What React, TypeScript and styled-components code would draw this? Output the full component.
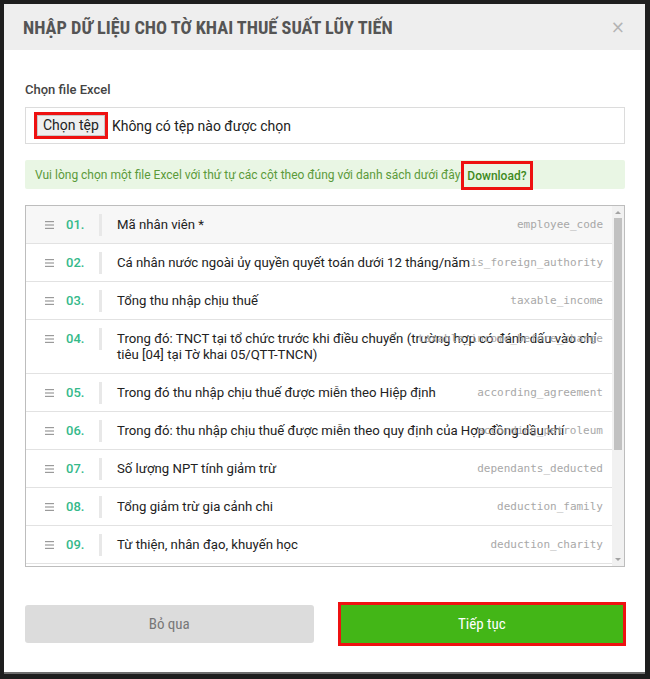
import React from "react";
import styled, { createGlobalStyle } from "styled-components";

const GlobalStyle = createGlobalStyle`
  html, body {
    margin: 0;
    padding: 0;
    background: #1e1e1e;
  }
  body {
    font-family: Roboto, "Liberation Sans", Arial, sans-serif;
  }
  * {
    box-sizing: border-box;
  }
`;

const condensed = `"Roboto Condensed", "Liberation Sans Narrow", Roboto, sans-serif`;

const Backdrop = styled.div`
  width: 650px;
  height: 679px;
  padding: 4px 5px 7px 4px;
  background: #1e1e1e;
`;

const Modal = styled.div`
  width: 641px;
  height: 668px;
  background: #fff;
  display: flex;
  flex-direction: column;
  box-shadow: 0 2px 0 #6e6e6e;
`;

const Header = styled.div`
  height: 46px;
  background: #eeeeee;
  display: flex;
  align-items: center;
  justify-content: space-between;
  padding: 0 20px 0 19px;
`;

const Title = styled.h4`
  margin: 0;
  font-family: ${condensed};
  font-weight: 700;
  font-size: 18.3px;
  color: #555;
`;

const Close = styled.span`
  font-family: "DejaVu Sans", sans-serif;
  font-size: 17px;
  color: #b4b4b4;
  line-height: 1;
`;

const Body = styled.div`
  flex: 1;
  display: flex;
  flex-direction: column;
  padding: 32px 20px 0 21px;
`;

const Label = styled.label`
  font-size: 13px;
  font-weight: 500;
  color: #444;
  line-height: 16px;
`;

const FileBox = styled.div`
  margin-top: 9px;
  height: 37px;
  border: 1px solid #dcdcdc;
  display: flex;
  align-items: center;
  padding-left: 8px;
  gap: 4px;
  font-size: 14px;
  color: #222;
`;

const Highlight = styled.span`
  display: inline-flex;
  border: 3px solid #ee1111;
`;

const PickButton = styled.span`
  display: inline-block;
  background: #efefef;
  border: 1px solid #c8c8c8;
  padding: 1px 5px;
  font-size: 14px;
  color: #222;
  line-height: 17px;
`;

const Alert = styled.div`
  margin-top: 16px;
  height: 29px;
  background: #e9f6e4;
  border-radius: 2px;
  display: flex;
  align-items: center;
  padding-left: 10px;
  font-size: 12px;
  color: #5b9a3a;
`;

const DownloadBox = styled.span`
  display: inline-flex;
  align-items: center;
  margin-left: 1px;
  margin-top: 2px;
  height: 29px;
  padding: 0 3px;
  border: 3px solid #ee1111;
  color: #3f8a1e;
  font-weight: 500;
`;

const List = styled.div`
  margin-top: 16px;
  height: 362px;
  border: 1px solid #bdbdbd;
  display: flex;
`;

const Rows = styled.div`
  flex: 1;
  overflow: hidden;
`;

const Row = styled.div<{ $active?: boolean }>`
  position: relative;
  display: flex;
  align-items: flex-start;
  padding: 11px 9px 10px 19px;
  border-bottom: 1px solid #e2e2e2;
  background: ${(p) => (p.$active ? "#f7f7f7" : "#fff")};
  line-height: 16px;
`;

const Handle = styled.span`
  width: 10px;
  height: 16px;
  display: flex;
  align-items: center;
  color: #9a9a9a;
`;

const Num = styled.span`
  width: 33px;
  margin-left: 11px;
  font-size: 13px;
  font-weight: 500;
  color: #35b98a;
`;

const Divider = styled.span`
  width: 3px;
  height: 22px;
  margin: -3px 0;
  background: #e8e8e8;
`;

const Name = styled.span`
  margin-left: 15px;
  font-size: 13.2px;
  color: #222;
  flex: 1;
`;

const Code = styled.span`
  position: absolute;
  right: 9px;
  top: 11px;
  font-family: "DejaVu Sans Mono", monospace;
  font-size: 11px;
  color: #a8a8a8;
`;

const Track = styled.div`
  width: 12px;
  background: #f1f1f1;
  display: flex;
  flex-direction: column;
  align-items: center;
  padding: 3px 0;
`;

const Arrow = styled.span<{ $down?: boolean }>`
  width: 0;
  height: 0;
  border-left: 3px solid transparent;
  border-right: 3px solid transparent;
  ${(p) =>
    p.$down ? "border-top: 3px solid #a3a3a3;" : "border-bottom: 3px solid #a3a3a3;"}
  margin: 2px 0;
`;

const Thumb = styled.div`
  width: 8px;
  height: 232px;
  margin-top: 2px;
  background: #c1c1c1;
`;

const Spacer = styled.div`
  flex: 1;
`;

const Footer = styled.div`
  display: grid;
  grid-template-columns: 1fr 1fr;
  gap: 24px;
  padding: 35px 19px 0 21px;
  align-items: center;
`;

const Button = styled.button<{ $primary?: boolean }>`
  height: ${(p) => (p.$primary ? "44px" : "38px")};
  border: ${(p) => (p.$primary ? "3px solid #ee1111" : "none")};
  border-radius: ${(p) => (p.$primary ? "0" : "3px")};
  background: ${(p) => (p.$primary ? "#43b617" : "#dcdcdc")};
  color: ${(p) => (p.$primary ? "#fff" : "#777")};
  font-family: ${condensed};
  font-size: 15px;
`;

const HandleIcon = () => (
  <svg width="9" height="8" viewBox="0 0 9 8">
    <rect x="0" y="0" width="9" height="1.2" fill="currentColor" />
    <rect x="0" y="3.4" width="9" height="1.2" fill="currentColor" />
    <rect x="0" y="6.8" width="9" height="1.2" fill="currentColor" />
  </svg>
);

const columns = [
  { name: "Mã nhân viên *", code: "employee_code" },
  { name: "Cá nhân nước ngoài ủy quyền quyết toán dưới 12 tháng/năm", code: "is_foreign_authority" },
  { name: "Tổng thu nhập chịu thuế", code: "taxable_income" },
  {
    name: "Trong đó: TNCT tại tổ chức trước khi điều chuyển (trường hợp có đánh dấu vào chỉ tiêu [04] tại Tờ khai 05/QTT-TNCN)",
    code: "taxable_income_before_change",
  },
  { name: "Trong đó thu nhập chịu thuế được miễn theo Hiệp định", code: "according_agreement" },
  { name: "Trong đó: thu nhập chịu thuế được miễn theo quy định của Hợp đồng dầu khí", code: "according_petroleum" },
  { name: "Số lượng NPT tính giảm trừ", code: "dependants_deducted" },
  { name: "Tổng giảm trừ gia cảnh chi", code: "deduction_family" },
  { name: "Từ thiện, nhân đạo, khuyến học", code: "deduction_charity" },
  { name: "Các khoản đóng bảo hiểm được trừ", code: "deduction_insurance" },
];

export default function App(): JSX.Element {
  return (
    <>
      <GlobalStyle />
      <Backdrop>
        <Modal>
          <Header>
            <Title>NHẬP DỮ LIỆU CHO TỜ KHAI THUẾ SUẤT LŨY TIẾN</Title>
            <Close>×</Close>
          </Header>
          <Body>
            <Label>Chọn file Excel</Label>
            <FileBox>
              <Highlight>
                <PickButton>Chọn tệp</PickButton>
              </Highlight>
              <span>Không có tệp nào được chọn</span>
            </FileBox>
            <Alert>
              Vui lòng chọn một file Excel với thứ tự các cột theo đúng với danh sách dưới đây
              <DownloadBox>Download?</DownloadBox>
            </Alert>
            <List>
              <Rows>
                {columns.map((c, i) => (
                  <Row key={c.code} $active={i === 0}>
                    <Handle>
                      <HandleIcon />
                    </Handle>
                    <Num>{String(i + 1).padStart(2, "0")}.</Num>
                    <Divider />
                    <Name>{c.name}</Name>
                    <Code>{c.code}</Code>
                  </Row>
                ))}
              </Rows>
              <Track>
                <Arrow />
                <Thumb />
                <Spacer />
                <Arrow $down />
              </Track>
            </List>
          </Body>
          <Footer>
            <Button>Bỏ qua</Button>
            <Button $primary>Tiếp tục</Button>
          </Footer>
          <Spacer />
        </Modal>
      </Backdrop>
    </>
  );
}
